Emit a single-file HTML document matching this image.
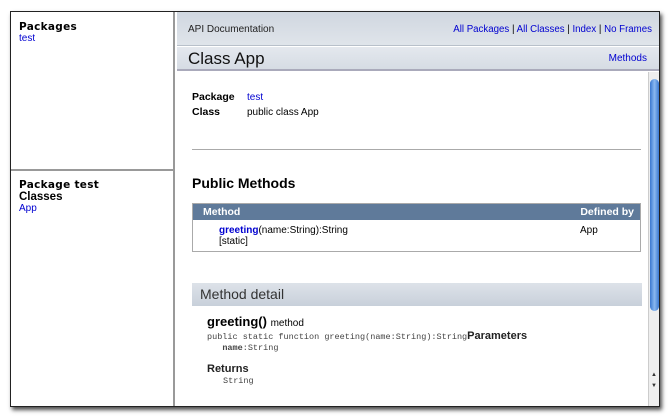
<!DOCTYPE html>
<html><head><meta charset="utf-8"><style>
*{margin:0;padding:0;box-sizing:border-box}
body{width:672px;height:420px;background:#fff;position:relative;overflow:hidden;font-family:"Liberation Sans",sans-serif;font-size:10px;color:#000}
.win{position:absolute;left:10px;top:11px;width:650px;height:396px;border:1px solid #222;background:#fff;box-shadow:2px 3px 4px rgba(0,0,0,.7)}
a{color:#0000d0;text-decoration:none}
.lf{position:absolute;left:0;top:0;width:164px;height:100%;border-right:2px solid #999}
.lf h3{font-family:"DejaVu Sans",sans-serif;font-size:10.5px;font-weight:bold;letter-spacing:.3px}
.hd{position:absolute;left:166px;top:0;right:0;height:34px;background:linear-gradient(#d0d7e0,#dfe4ea);border-bottom:1px solid #b8c0ca}
.cb{position:absolute;left:166px;top:35px;right:0;height:24px;background:linear-gradient(#e4e8ee,#d6dce4);border-bottom:2px solid #aab}
.scr{position:absolute;left:637px;top:60px;width:11px;bottom:0;background:#eee;border-left:1px solid #ccc}
.thumb{position:absolute;left:1px;top:7px;width:9px;height:232px;border-radius:5px;background:linear-gradient(90deg,#3a78d0,#8ab8f0,#3a78d0)}
</style></head><body>
<div class="win">
 <div class="lf">
  <div style="position:absolute;left:8px;top:9px"><h3>Packages</h3><a>test</a></div>
  <div style="position:absolute;left:0;top:157px;width:164px;border-top:2px solid #999"></div>
  <div style="position:absolute;left:8px;top:167px"><h3>Package test</h3><div style="font-weight:bold;font-size:11.5px;margin-top:0">Classes</div><a>App</a></div>
 </div>
 <div class="hd"><span style="position:absolute;left:11px;top:12px;font-size:10px;color:#222">API Documentation</span>
  <span style="position:absolute;right:7px;top:12px;font-size:9.7px"><a>All Packages</a> | <a>All Classes</a> | <a>Index</a> | <a>No Frames</a></span></div>
 <div class="cb"><span style="position:absolute;left:11px;top:2px;font-size:17px;color:#111">Class App</span>
  <a style="position:absolute;right:12px;top:6px">Methods</a></div>
 <div style="position:absolute;left:181px;top:78px;font-size:10px;line-height:15px">
  <div><b style="display:inline-block;width:55px;font-size:10.5px">Package</b><a>test</a></div>
  <div><b style="display:inline-block;width:55px;font-size:10.5px">Class</b>public class App</div>
 </div>
 <div style="position:absolute;left:181px;top:137px;width:449px;border-top:1px solid #aaa"></div>
 <div style="position:absolute;left:181px;top:163px;font-size:14px;font-weight:bold">Public Methods</div>
 <div style="position:absolute;left:181px;top:191px;width:449px;height:49px;border:1px solid #aaa">
  <div style="background:#5f7a9a;color:#fff;font-weight:bold;height:16px;padding:2px 10px 0;font-size:10.5px">Method<span style="float:right;margin-right:-4px">Defined by</span></div>
  <div style="padding:5px 0 0 26px;line-height:11px;font-size:10px"><a style="font-weight:bold">greeting</a>(name:String):String<span style="position:absolute;left:387px">App</span><br>[static]</div>
 </div>
 <div style="position:absolute;left:181px;top:271px;width:450px;height:23px;background:linear-gradient(#dde2e9,#c8d0da);font-size:14px;color:#333;padding:3px 8px">Method detail</div>
 <div style="position:absolute;left:196px;top:302px;font-size:13px;font-weight:bold">greeting() <span style="font-size:10px;font-weight:normal">method</span></div>
 <div style="position:absolute;left:196px;top:319px;font-family:'Liberation Mono',monospace;font-size:8.5px;color:#444;line-height:11px">public static function greeting(name:String):String<b style="font-family:'Liberation Sans',sans-serif;font-size:11px;color:#222">Parameters</b><br>&nbsp;&nbsp;&nbsp;<b>name</b>:String</div>
 <div style="position:absolute;left:196px;top:351px;font-size:11px;font-weight:bold;color:#222">Returns</div>
 <div style="position:absolute;left:212px;top:364px;font-family:'Liberation Mono',monospace;font-size:8.5px;color:#444">String</div>
 <div class="scr"><div class="thumb"></div>
  <div style="position:absolute;left:0;top:298px;width:10px;font-size:6px;line-height:11px;text-align:center;color:#333">▲<br>▼</div></div>
</div>
</body></html>
